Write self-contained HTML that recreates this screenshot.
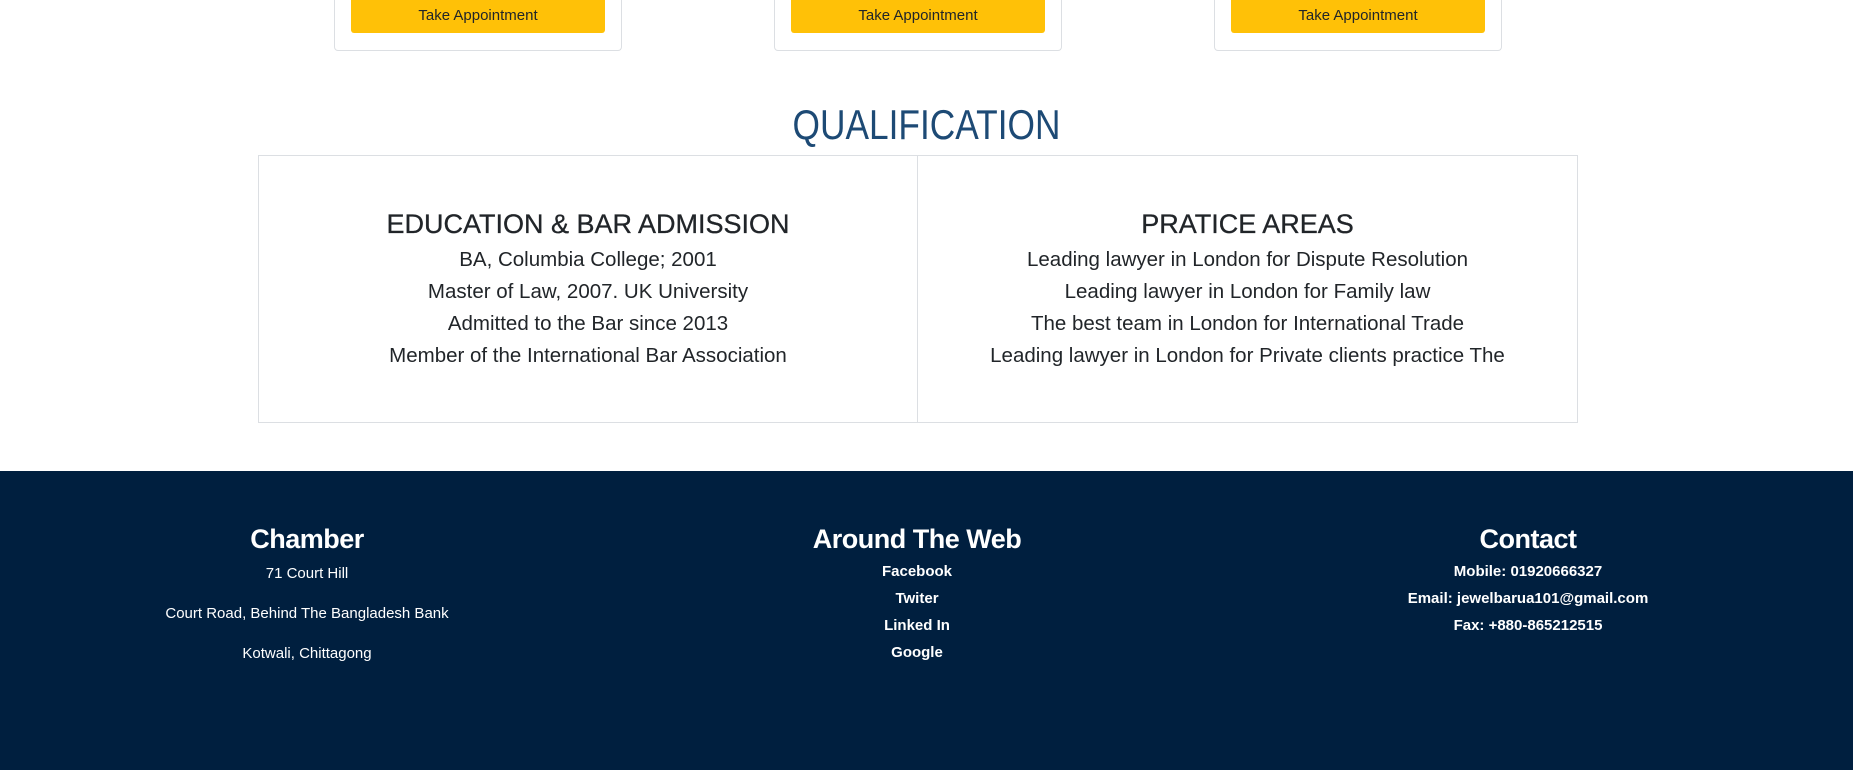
<!DOCTYPE html>
<html><head><style>
*{margin:0;padding:0;box-sizing:border-box}
body{width:1853px;height:770px;overflow:hidden;background:#fff;font-family:"Liberation Sans",sans-serif;position:relative;color:#212529}
.card{position:absolute;top:-10px;height:61px;width:288px;border:1px solid #dcdfe3;border-top:none;border-radius:0 0 4px 4px}
.btn{position:absolute;left:16px;right:16px;top:10px;height:33px;background:#ffc107;border-radius:0 0 3px 3px;font-size:15px;line-height:32px;text-align:center;color:#212529}
.q{position:absolute;top:100px;left:0;width:1853px;text-align:center;font-size:42px;font-weight:300;color:#1d4a75;line-height:50px;transform:scaleX(0.84)}
.box{position:absolute;top:155px;height:268px;border:1px solid #dcdfe3;text-align:center}
.box h3{font-weight:normal;font-size:27px;margin-top:50px;line-height:36px;color:#212529;-webkit-text-stroke:0.3px #212529}
.box p{font-size:20.5px;line-height:32px;margin-top:2px}
footer{position:absolute;top:471px;left:0;width:1853px;height:299px;background:#001f3f;color:#fff}
.col{position:absolute;top:50px;width:600px;text-align:center}
.col h4{font-size:27px;line-height:36px;font-weight:bold;letter-spacing:-0.5px}
.col p{font-size:15px}
</style></head><body>
<div class="card" style="left:334px"><div class="btn">Take Appointment</div></div>
<div class="card" style="left:774px"><div class="btn">Take Appointment</div></div>
<div class="card" style="left:1214px"><div class="btn">Take Appointment</div></div>
<div class="q">QUALIFICATION</div>
<div class="box" style="left:258px;width:660px">
<h3>EDUCATION &amp; BAR ADMISSION</h3>
<p>BA, Columbia College; 2001<br>Master of Law, 2007. UK University<br>Admitted to the Bar since 2013<br>Member of the International Bar Association</p>
</div>
<div class="box" style="left:917px;width:661px">
<h3>PRATICE AREAS</h3>
<p>Leading lawyer in London for Dispute Resolution<br>Leading lawyer in London for Family law<br>The best team in London for International Trade<br>Leading lawyer in London for Private clients practice The</p>
</div>
<footer>
<div class="col" style="left:7px"><h4>Chamber</h4><p style="line-height:40px;margin-top:-3px">71 Court Hill<br>Court Road, Behind The Bangladesh Bank<br>Kotwali, Chittagong</p></div>
<div class="col" style="left:617px"><h4>Around The Web</h4><p style="line-height:27px;font-weight:bold;margin-top:1px">Facebook<br>Twiter<br>Linked In<br>Google</p></div>
<div class="col" style="left:1228px"><h4>Contact</h4><p style="line-height:27px;font-weight:bold;margin-top:1px">Mobile: 01920666327<br>Email: jewelbarua101@gmail.com<br>Fax: +880-865212515</p></div>
</footer>
</body></html>
